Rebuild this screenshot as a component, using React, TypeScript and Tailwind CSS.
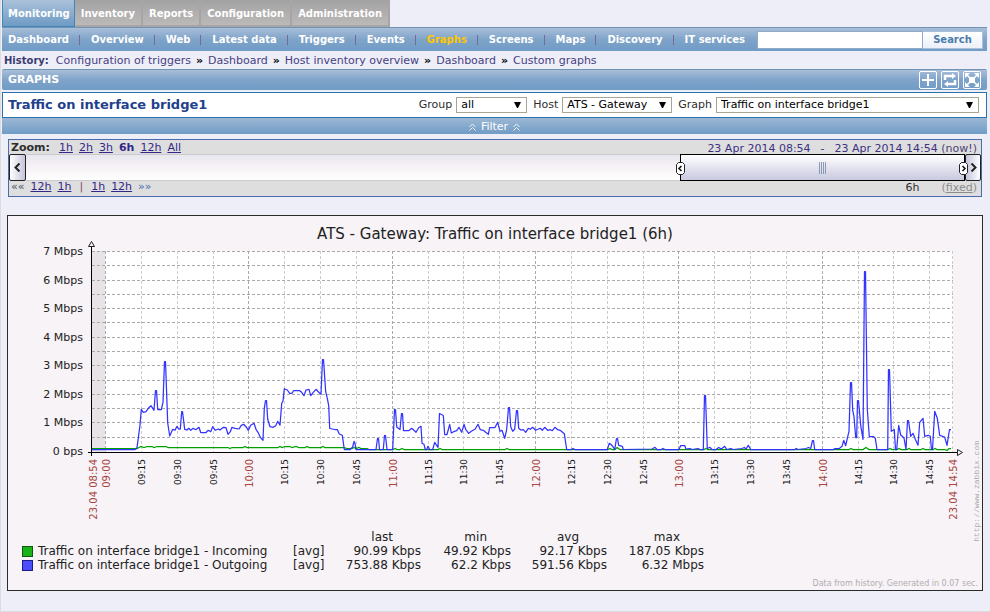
import { Fragment } from "react";
import clsx from "clsx";

const tabs = ["Monitoring", "Inventory", "Reports", "Configuration", "Administration"];

const menu = [
  "Dashboard",
  "Overview",
  "Web",
  "Latest data",
  "Triggers",
  "Events",
  "Graphs",
  "Screens",
  "Maps",
  "Discovery",
  "IT services",
];

const crumbs = [
  "Configuration of triggers",
  "Dashboard",
  "Host inventory overview",
  "Dashboard",
  "Custom graphs",
];

const yLabels = ["7 Mbps", "6 Mbps", "5 Mbps", "4 Mbps", "3 Mbps", "2 Mbps", "1 Mbps", "0 bps"];
const yLines = [251, 265, 280, 294, 308, 322, 337, 351, 365, 380, 394, 408, 422, 437];

const xTicks: [number, string][] = [
  [105, "09:00"],
  [141, "09:15"],
  [177, "09:30"],
  [213, "09:45"],
  [248, "10:00"],
  [284, "10:15"],
  [320, "10:30"],
  [356, "10:45"],
  [392, "11:00"],
  [428, "11:15"],
  [463, "11:30"],
  [499, "11:45"],
  [535, "12:00"],
  [571, "12:15"],
  [607, "12:30"],
  [643, "12:45"],
  [678, "13:00"],
  [714, "13:15"],
  [750, "13:30"],
  [786, "13:45"],
  [822, "14:00"],
  [858, "14:15"],
  [893, "14:30"],
  [929, "14:45"],
];

const incoming =
  "92,448.5 137,448.5 139,447.5 141,446.5 144,447.5 147,446.5 152,446.5 154,447.5 157,446.5 166,446.5 168,447.5 228,447.5 230,448.5 232,447.5 243,447.5 245,446.5 247,447.5 278,447.5 280,446.5 282,447.5 285,446.5 290,446.5 292,447.5 296,446.5 299,447.5 305,447.5 307,446.5 309,447.5 321,447.5 323,446.5 325,447.5 344,447.5 347,448.5 352,448.5 354,447.5 356,448.5 359,447.5 361,448.5 367,448.5 369,449.5 393,449.5 395,448.5 397,449.5 400,449.5 402,448.5 404,449.5 438,449.5 440,448.5 442,449.5 505,449.5 507,448.5 509,449.5 608,449.5 610,448.5 612,449.5 615,449.5 617,447.5 620,449.5 704,449.5 706,448.5 708,449.5 849,449.5 851,448.5 853,449.5 863,449.5 866,447.5 869,449.5 888,449.5 890,448.5 892,449.5 897,449.5 899,448.5 901,449.5 907,449.5 909,448.5 911,449.5 921,449.5 923,448.5 925,449.5 933,449.5 935,448.5 937,449.5 945,449.5 947,450.5 949,448.5 951,448.5";

const outgoing =
  "92,449.5 135,449.5 137,447.7 138.7,435 140,425 141.3,409.3 143.3,412.3 146,411.7 148.3,408.3 151,405.7 154,410.3 155.5,390.5 156.5,390.5 157.7,409.5 161.3,409.5 163,402.3 164.5,361.5 165.5,361.5 167.7,423 169.7,436 172.7,429.3 175,430.3 177,426.3 178.7,429 180.3,429 181.7,411.5 182.5,411.5 184.7,429.3 187,430 188.7,428.3 190.7,430.3 193.3,428.3 195.7,429.7 199,427.3 200.7,432.5 206,432.5 208.3,430.3 210.7,431.7 212.7,426.7 215.3,430.3 218.3,429 220,430 223.3,427.3 226,427.7 228,434.3 230.3,431.7 232,427.3 235,428.3 239,429 241.3,425.3 243.7,424.3 246,426.7 248.3,430.3 250.7,425.3 254,423.3 256,429.3 258,432.3 260.3,437.3 263,440.3 264.3,408.3 265.5,400.5 266.5,400.5 267.7,419.3 270,426.7 273.3,427.3 275.7,425.7 277.7,421.3 280,425.3 281.7,403.3 283,401 284.3,388.7 287.3,390 289.7,393.3 292,393.3 293.7,390.5 299.3,390.5 301.7,392.3 304,395.7 306,390 309,389.3 310.7,395.7 313.3,392.3 316,389.3 318.3,391.7 321,394.3 322.5,359.5 323.5,359.5 325.7,391.7 327.3,398.3 328.7,405.7 329.7,428.5 335,429.5 337.3,429.5 339.3,434 342.3,435.3 344.3,449.5 350,449.5 352.7,447 354,441.3 355,443.3 356,449.5 376,449.5 377.5,438.5 378.5,438.5 379.5,449.5 383.3,449.5 384.5,435.5 385.5,435.5 387,449.5 392.7,449.5 394.5,409.5 395.5,409.5 396.7,427 400,429.5 401.5,413.5 402.5,413.5 403.5,430.5 409,430.5 411.7,428.3 414,430.3 416,432.3 418.7,427.7 421,426.3 422,443.3 424,444.3 425.3,449.5 426.7,449.5 428,446.3 429.7,449.5 432.7,449.5 434.7,442.3 436,444.3 438,447.3 439.5,413.5 443.3,415.5 444.7,434.5 447,434.5 449.7,424.3 451.3,433 453.7,431.7 456.7,430.7 459,427.3 461.7,432.3 464,424.3 465.7,429.3 468.7,433.3 471.7,431 475,429.3 478,424.3 480.3,429.7 483.3,430.3 485.7,432.3 488.3,434.3 489.7,427.5 495,427.5 497.7,422.3 500,431.3 502,430.3 504.7,438.3 506.7,429.3 508.5,407.5 509.5,407.5 510.7,426.7 512.7,431.3 514.7,429.3 516.5,410.5 517.5,410.5 518.7,428.3 520.7,430 523.3,429.7 525.7,432.3 528.3,428.3 530.3,429.3 532.7,427.3 535.7,430.3 540.3,428.3 542.3,430.3 544.7,427.3 547.7,430.3 550.3,429.7 552.3,430.7 555,427.3 557.7,429.7 560.7,430.7 564.3,433.7 566.7,449.5 571,449.5 573,448.5 575,449.5 607.3,449.5 609.3,443.3 610.7,444.3 612.7,446.3 614.7,449.5 616.5,438.5 617.5,438.5 618.7,445.3 622.3,446.3 623.3,449.5 652,449 655,447.3 657,449.5 661,449.5 663,448.5 665,449.5 679,449.5 680.7,445.5 684.7,445.5 686,449 690,448.5 692,449.5 698,448.5 700,449.5 703.3,449.5 704.5,395.5 705.5,395.5 707.3,448.5 710,447.3 712,449.5 716,449.5 718.7,447.5 721.3,449 724.7,446.3 726.7,449.5 731,448.5 733,449.5 742,448.5 744.3,447.5 746,449 748.3,445.3 750.7,449.5 794.7,449.5 796.3,448.5 798,449.5 806,448.5 808.5,447.5 810.7,448.5 812.5,440.5 813.5,440.5 814.7,449.5 833.3,449.5 835,448.5 839.3,448.5 842,446.3 843.7,440.3 845.7,445.7 847.3,438.3 849,431.3 850.5,382.5 851.5,382.5 852.7,410.3 854,416.7 855.7,437.5 856.7,437.5 857.5,400.5 858.5,400.5 860.7,425.3 863,439.3 864.5,271.5 865.5,271.5 867.3,409.3 869.3,436.5 873.3,436.5 875.3,438.3 877,449.5 887.7,449.5 888.5,369.5 889.5,369.5 891.3,431.3 894.3,429.5 895.5,449.5 896.7,449.5 898.7,425.3 900.7,435 904,438 906,449.5 907.5,420.5 908.5,420.5 910.7,436.3 913,433.3 915.3,439.3 918,445.3 919.7,422.3 923,418.3 924.7,436.3 928.3,435.3 930.3,436.3 931.5,449.5 932.5,449.5 934.7,411.3 937.3,418.3 939.7,435.3 944.7,437 947,445.3 949.5,429.5 951,429.5";

const legend = [
  {
    name: "Traffic on interface bridge1 - Incoming",
    swatch: "bg-[#19b219] border-[#0c590c]",
    values: ["90.99 Kbps", "49.92 Kbps", "92.17 Kbps", "187.05 Kbps"],
  },
  {
    name: "Traffic on interface bridge1 - Outgoing",
    swatch: "bg-[#4c4cff] border-[#1c1c80]",
    values: ["753.88 Kbps", "62.2 Kbps", "591.56 Kbps", "6.32 Mbps"],
  },
];

type SelectProps = {
  id: string;
  label: string;
  options: string[];
  className: string;
};

function Select({ id, label, options, className }: SelectProps) {
  return (
    <div className="flex items-center gap-1">
      <label htmlFor={id}>{label}</label>
      <div className={clsx("relative", className)}>
        <select
          id={id}
          className="block h-4 w-full appearance-none border border-[#a9a595] bg-white pl-1 text-[11px] leading-3 text-black"
        >
          {options.map((o) => (
            <option key={o}>{o}</option>
          ))}
        </select>
        <svg
          viewBox="0 0 7 6"
          className="pointer-events-none absolute top-[5px] right-1.5 h-1.5 w-[7px]"
        >
          <path d="M0 0h7L4 6H3z" fill="#000" />
        </svg>
      </div>
    </div>
  );
}

function Chevrons() {
  return (
    <svg viewBox="0 0 7 8" className="h-2 w-[7px]" fill="none" stroke="#eef3f8">
      <path d="M.5 4 3.5 1l3 3M.5 7.5l3-3 3 3" />
    </svg>
  );
}

function Header() {
  return (
    <header>
      <nav className="flex h-[27px] text-[10px] font-bold text-white">
        {tabs.map((tab, i) => (
          <a
            key={tab}
            href="#"
            className={clsx(
              "flex items-center border-r pt-0.5",
              i === 0
                ? "border-b border-l border-[#4088b8] bg-linear-to-b from-[#abc1da] to-[#6e9ac4] pr-1 pl-[5px]"
                : "border-r-2 border-b-2 border-[#a6a4a4] bg-linear-to-b from-[#a3a2a2] to-[#bcb9b9] px-1.5"
            )}
          >
            {tab}
          </a>
        ))}
      </nav>
      <div className="flex h-6 items-center justify-between border-t border-[#7094b6] bg-linear-to-b from-[#a8bed8] via-[#7fa3c9] to-[#709cc6] pr-1 pl-1.5">
        <nav className="flex items-center text-[10px] font-bold text-white">
          {menu.map((item, i) => (
            <Fragment key={item}>
              {i > 0 && <span className="mr-[11px] ml-[10px] h-[10px] w-px bg-[#75699a]" />}
              <a href="#" className={clsx(item === "Graphs" && "text-[#ffc800]")}>
                {item}
              </a>
            </Fragment>
          ))}
        </nav>
        <form className="flex h-[18px]">
          <input
            type="text"
            aria-label="Search"
            className="w-[166px] border border-[#8fabcb] bg-white px-1 text-[11px]"
          />
          <button
            type="button"
            className="w-[60px] border border-l-0 border-[#a9bfda] bg-linear-to-b from-white to-[#edf0f9] text-[10px] font-bold text-[#4a7bac]"
          >
            Search
          </button>
        </form>
      </div>
      <div className="flex h-[18px] items-center pt-0.5 pl-0.5 text-[#47417f]">
        <b className="mr-[7px] text-[10px] text-[#3b3a72]">History:</b>
        {crumbs.map((crumb, i) => (
          <Fragment key={i}>
            {i > 0 && <span className="mx-[5px] font-bold text-black">»</span>}
            <a href="#">{crumb}</a>
          </Fragment>
        ))}
      </div>
    </header>
  );
}

function TitleBar() {
  const box = "block size-[18px]";
  return (
    <div className="flex h-[21px] items-center justify-between rounded-xs border-t border-[#7094b6] bg-linear-to-b from-[#a8bed8] via-[#7fa3c9] to-[#709cc6] pr-1.5 pl-1.5">
      <h1 className="text-[11px] font-bold text-white">GRAPHS</h1>
      <div className="flex gap-1">
        <button type="button" aria-label="Add to favourites" className={box}>
          <svg viewBox="0 0 18 18" fill="none" stroke="#fff">
            <rect x=".5" y=".5" width="17" height="17" rx="1.5" />
            <path d="M9 3v12M3 9h12" strokeWidth="2" />
          </svg>
        </button>
        <button type="button" aria-label="Reset" className={box}>
          <svg viewBox="0 0 18 18" fill="none" stroke="#fff">
            <rect x=".5" y=".5" width="17" height="17" rx="1.5" />
            <path d="M4 9V5h8M14 9v4H6" strokeWidth="2.5" />
            <path d="M11 2l4 3-4 3zM7 10l-4 3 4 3z" fill="#fff" stroke="none" />
          </svg>
        </button>
        <button type="button" aria-label="Fullscreen" className={box}>
          <svg viewBox="0 0 18 18" fill="none" stroke="#fff">
            <rect x=".5" y=".5" width="17" height="17" rx="1.5" />
            <path d="M4 4l10 10M14 4L4 14" strokeWidth="1.5" />
            <path
              d="M2 2h5L2 7zM16 2h-5l5 5zM2 16h5l-5-5zM16 16h-5l5-5z"
              fill="#fff"
              stroke="none"
            />
            <rect x="6" y="6" width="6" height="6" fill="#fff" stroke="none" />
          </svg>
        </button>
      </div>
    </div>
  );
}

function Handle({ d, className }: { d: string; className: string }) {
  return (
    <svg viewBox="0 0 9 13" className={clsx("absolute top-[7px] h-[13px] w-[9px]", className)}>
      <path d="M2.5.5h4l2 2v8l-2 2h-4l-2-2v-8z" fill="#fff" stroke="#222" />
      <path d={d} fill="none" stroke="#111" strokeWidth="1.5" />
    </svg>
  );
}

function Timeline() {
  const link = "text-[#33288a] underline";
  return (
    <section className="mr-[5px] ml-1.5 mt-[5px] border border-[#4a6aae] bg-[#dedede]">
      <div className="flex h-[14px] items-center justify-between pr-1 pl-0.5">
        <div className="flex items-center gap-1.5 pt-0.5">
          <b className="mr-[3px] text-[#2e2e2e]">Zoom:</b>
          {["1h", "2h", "3h", "6h", "12h", "All"].map((z) => (
            <a
              key={z}
              href="#"
              className={z === "6h" ? "font-bold text-[#33288a]" : link}
            >
              {z}
            </a>
          ))}
        </div>
        <div className="flex pt-[3px] text-[#3d3182]">
          <span>23 Apr 2014 08:54</span>
          <span className="mx-[10px]">-</span>
          <span>23 Apr 2014 14:54&nbsp;</span>
          <a href="#" className="text-[#4b4375]">
            (now!)
          </a>
        </div>
      </div>
      <div className="flex h-[27px] border-y border-[#c9c9cf] bg-linear-to-b from-[#e7e7ef] via-[#f7f2f5] to-white">
        <button
          type="button"
          aria-label="Move left"
          className="-my-px flex w-[17px] items-center justify-center rounded-xs border border-[#222] bg-linear-to-r from-white to-[#c5c5dc]"
        >
          <svg viewBox="0 0 7 9" className="h-[9px] w-[7px]">
            <path d="M5.5.5l-4 4 4 4" fill="none" stroke="#222" strokeWidth="2" />
          </svg>
        </button>
        <div className="flex-1" />
        <div className="relative -my-px flex w-[285px] items-center justify-center border border-black bg-linear-to-b from-white via-[#e4e4f0] to-[#c9c9e0]">
          <Handle d="M5.5 4L3 6.5 5.5 9" className="-left-[5px]" />
          <div className="flex gap-px">
            {[0, 1, 2, 3].map((n) => (
              <span key={n} className="h-3 w-px bg-[#8a9ab5]" />
            ))}
          </div>
          <Handle d="M3.5 4L6 6.5 3.5 9" className="-right-1" />
        </div>
        <button
          type="button"
          aria-label="Move right"
          className="-my-px flex w-4 items-center justify-center rounded-xs border border-[#222] bg-linear-to-r from-[#c5c5dc] to-white"
        >
          <svg viewBox="0 0 7 9" className="h-[9px] w-[7px]">
            <path d="M1.5.5l4 4-4 4" fill="none" stroke="#222" strokeWidth="2" />
          </svg>
        </button>
      </div>
      <div className="flex h-[15px] items-start justify-between pr-1 pl-0.5 leading-3">
        <div className="flex gap-1.5 text-[#4c4c6e]">
          <span>««</span>
          <a href="#" className={link}>12h</a>
          <a href="#" className={link}>1h</a>
          <span className="mx-0.5 text-[#8b4a6b]">|</span>
          <a href="#" className={link}>1h</a>
          <a href="#" className={link}>12h</a>
          <span className="text-[#4a6aae]">»»</span>
        </div>
        <div className="flex gap-[22px] pt-px">
          <span>6h</span>
          <span className="text-[#8c8c8c]">
            (<a href="#" className="underline">fixed</a>)
          </span>
        </div>
      </div>
    </section>
  );
}

function Plot() {
  return (
    <svg viewBox="8 241 974 288" className="block w-full" role="img" aria-label="Traffic">
      <rect x="92" y="251" width="861" height="201" fill="#fff" />
      <rect x="92" y="251" width="13" height="201" fill="#e7e3e7" />
      <g strokeDasharray="3 2" stroke="#aaa" shapeRendering="crispEdges">
        {yLines.map((y) => (
          <path key={y} d={`M92 ${y + 0.5}H953`} />
        ))}
        {xTicks.map(([x, t]) => (
          <path key={t} d={`M${x + 0.5} 251V452`} stroke={t.endsWith(":00") ? "#aaa" : "#ccc"} />
        ))}
        <path d="M952.5 251V452" stroke="#ccc" />
      </g>
      <polyline points={incoming} fill="none" stroke="#00a000" strokeWidth="1.25" />
      <polyline
        points={outgoing}
        fill="none"
        stroke="#3333ff"
        strokeWidth="1.25"
        strokeLinejoin="round"
      />
      <path d="M91.5 247V456M88 452.5H957" stroke="#000" fill="none" shapeRendering="crispEdges" />
      <path d="M88.5 246.5h6l-3-5zM957.5 449.5v6l5-3z" fill="#f7f3f7" stroke="#222" />
      <g fontSize="11" fill="#222" textAnchor="end">
        {yLabels.map((l, i) => (
          <text key={l} x="83" y={Math.round(255 + i * 28.5)}>
            {l}
          </text>
        ))}
      </g>
      <g textAnchor="end">
        {xTicks.map(([x, t]) =>
          t.endsWith(":00") ? (
            <text key={t} transform={`translate(${x + 5} 459) rotate(-90)`} fontSize="10" fill="#a94442">
              {t}
            </text>
          ) : (
            <text key={t} transform={`translate(${x + 4} 459) rotate(-90)`} fontSize="9" fill="#111">
              {t}
            </text>
          )
        )}
        <text transform="translate(97 459) rotate(-90)" fontSize="10" fill="#a94442">
          23.04 08:54
        </text>
        <text transform="translate(957 459) rotate(-90)" fontSize="10" fill="#a94442">
          23.04 14:54
        </text>
      </g>
    </svg>
  );
}

function Graph() {
  return (
    <section className="relative mr-1 ml-[5px] mt-[18px] border border-[#2b2b2b] bg-[#f7f3f7] text-[#222]">
      <h2 className="h-[25px] pt-2 text-center text-[15px] leading-5">
        ATS - Gateway: Traffic on interface bridge1 (6h)
      </h2>
      <Plot />
      <table className="mt-px ml-3.5 text-[12px] leading-[14px]">
        <thead>
          <tr>
            <th className="w-[271px]" />
            <th className="w-[42px]" />
            <th className="w-[86px] pr-7 text-right font-normal">last</th>
            <th className="w-[90px] pr-6 text-right font-normal">min</th>
            <th className="w-[96px] pr-7 text-right font-normal">avg</th>
            <th className="w-[97px] pr-6 text-right font-normal">max</th>
          </tr>
        </thead>
        <tbody>
          {legend.map((row) => (
            <tr key={row.name}>
              <td>
                <span className="flex items-center gap-[5px]">
                  <i className={clsx("size-[11px] border", row.swatch)} />
                  {row.name}
                </span>
              </td>
              <td>[avg]</td>
              {row.values.map((v) => (
                <td key={v} className="text-right">
                  {v}
                </td>
              ))}
            </tr>
          ))}
        </tbody>
      </table>
      <p className="h-[18px] pt-1.5 pr-1 text-right text-[8px] leading-3 text-[#b0adb0]">
        Data from history. Generated in 0.07 sec.
      </p>
      <span className="absolute right-0 bottom-12 font-['Liberation_Mono'] text-[8px] leading-[10px] text-[#aaa] [writing-mode:sideways-lr]">
        http://www.zabbix.com
      </span>
    </section>
  );
}

export default function App() {
  return (
    <div className="min-h-screen border-b border-l border-[#dcdce0] bg-[#eeeef8] pr-[3px] pl-px font-['DejaVu_Sans',Verdana,sans-serif] text-[11px] leading-[14px] text-[#2e2e2e]">
      <Header />
      <TitleBar />
      <div className="mt-0.5 flex h-[26px] items-center justify-between border border-[#2a72ac] bg-white pr-[7px] pl-[5px]">
        <h2 className="text-[13px] font-bold text-[#1f418c]">Traffic on interface bridge1</h2>
        <form className="flex gap-1.5">
          <Select id="group" label="Group" options={["all"]} className="w-[71px]" />
          <Select id="host" label="Host" options={["ATS - Gateway"]} className="w-[110px]" />
          <Select
            id="graph"
            label="Graph"
            options={["Traffic on interface bridge1"]}
            className="w-[263px]"
          />
        </form>
      </div>
      <button
        type="button"
        className="flex h-4 w-full items-center justify-center gap-[5px] bg-linear-to-b from-[#9db8d5] to-[#709cc6] pt-0.5 text-white"
      >
        <Chevrons />
        Filter
        <Chevrons />
      </button>
      <Timeline />
      <Graph />
    </div>
  );
}
